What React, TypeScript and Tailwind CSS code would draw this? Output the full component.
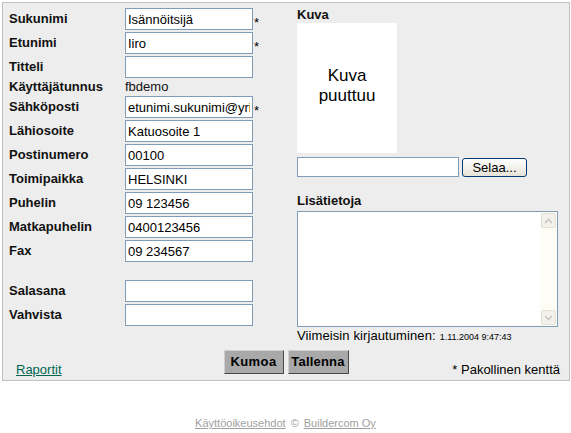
import React from "react";

const font = { fontFamily: '"Liberation Sans", Arial, sans-serif' };

type Row =
  | { kind: "input"; label: string; value: string; req?: boolean; pw?: boolean }
  | { kind: "text"; label: string; value: string }
  | { kind: "gap" };

const rows: Row[] = [
  { kind: "input", label: "Sukunimi", value: "Isännöitsijä", req: true },
  { kind: "input", label: "Etunimi", value: "Iiro", req: true },
  { kind: "input", label: "Titteli", value: "" },
  { kind: "text", label: "Käyttäjätunnus", value: "fbdemo" },
  { kind: "input", label: "Sähköposti", value: "etunimi.sukunimi@yritys.fi", req: true },
  { kind: "input", label: "Lähiosoite", value: "Katuosoite 1" },
  { kind: "input", label: "Postinumero", value: "00100" },
  { kind: "input", label: "Toimipaikka", value: "HELSINKI" },
  { kind: "input", label: "Puhelin", value: "09 123456" },
  { kind: "input", label: "Matkapuhelin", value: "0400123456" },
  { kind: "input", label: "Fax", value: "09 234567" },
  { kind: "gap" },
  { kind: "input", label: "Salasana", value: "", pw: true },
  { kind: "input", label: "Vahvista", value: "", pw: true },
];

function FormRow({ row }: { row: Row }) {
  if (row.kind === "gap") return <div className="h-[16px]" />;
  if (row.kind === "text")
    return (
      <div className="flex h-[16px] items-center">
        <span className="w-[116px] text-[13px] font-bold text-[#111]">{row.label}</span>
        <span className="text-[13px] text-[#111]">{row.value}</span>
      </div>
    );
  return (
    <div className="flex h-[24px] items-center">
      <span className="w-[116px] text-[13px] font-bold text-[#111]">{row.label}</span>
      <input
        type={row.pw ? "password" : "text"}
        defaultValue={row.value}
        className="h-[22px] w-[128px] border border-[#7f9db9] bg-white px-[2px] text-[13px] text-black outline-none"
        style={font}
      />
      {row.req && <span className="mt-[6px] self-center pl-[1px] text-[13px] leading-none text-black">*</span>}
    </div>
  );
}

function ScrollBtn({ up }: { up: boolean }) {
  return (
    <div className="flex h-[15px] w-[15px] items-center justify-center rounded-[2px] border border-[#e3e2d8] bg-[#f3f2ea]">
      <svg width="9" height="6" viewBox="0 0 9 6">
        <path
          d={up ? "M1 5 L4.5 1.5 L8 5" : "M1 1 L4.5 4.5 L8 1"}
          fill="none"
          stroke="#c8c8c0"
          strokeWidth="1.6"
        />
      </svg>
    </div>
  );
}

export default function App() {
  return (
    <div className="min-h-[433px] bg-white pt-[2px]" style={font}>
      <div className="ml-[2px] flex w-[568px] flex-col border border-[#c0c0c0] bg-[#ededed]">
        <div className="flex">
          <div className="w-[294px] pl-[6px] pt-[4px]">
            {rows.map((r, i) => (
              <FormRow key={i} row={r} />
            ))}
          </div>
          <div className="flex w-[261px] flex-col pt-[4px]">
            <div className="h-[16px] text-[13px] font-bold leading-[16px] text-[#111]">Kuva</div>
            <div className="flex h-[130px] w-[100px] flex-col items-center justify-center bg-white pb-[4px] text-[17px] leading-[20px] text-black">
              <span>Kuva</span>
              <span>puuttuu</span>
            </div>
            <div className="mt-[4px] flex h-[20px] items-center gap-[3px]">
              <input className="h-[20px] w-[162px] border border-[#7f9db9] bg-white outline-none" />
              <button
                className="h-[19px] w-[65px] rounded-[3px] border border-[#003c74] bg-gradient-to-b from-white to-[#e6e3d6] text-[13px] leading-[17px] text-black"
                style={font}
              >
                Selaa...
              </button>
            </div>
            <div className="mt-[16px] h-[16px] text-[13px] font-bold leading-[16px] text-[#111]">Lisätietoja</div>
            <div className="mt-[2px] flex h-[116px] w-[261px] border border-[#7f9db9] bg-white">
              <textarea className="flex-1 resize-none bg-white outline-none" />
              <div className="flex w-[17px] flex-col justify-between bg-[#fdfdf6] p-[1px] pr-[1px]">
                <ScrollBtn up />
                <ScrollBtn up={false} />
              </div>
            </div>
            <div className="mt-[1px] flex h-[16px] items-baseline leading-[16px] text-black">
              <span className="text-[13px] tracking-[0.1px]">Viimeisin kirjautuminen:</span>
              <span className="ml-[4px] text-[9px]">1.11.2004 9:47:43</span>
            </div>
          </div>
        </div>
        <div className="grid h-[36px] grid-cols-[1fr_auto_1fr]">
          <div className="flex items-end pb-[2px] pl-[13px]">
            <a href="#" className="text-[13px] leading-[16px] text-[#006652] underline">
              Raportit
            </a>
          </div>
          <div className="flex gap-[4px] pt-[6px]">
            <button
              className="h-[24px] w-[60px] border border-t-[#d0d0d0] border-l-[#d0d0d0] border-r-[#4a4a4a] border-b-[#4a4a4a] bg-[#a9a9a9] text-[13px] font-bold tracking-[0.4px] text-black"
              style={font}
            >
              Kumoa
            </button>
            <button
              className="h-[24px] w-[61px] border border-t-[#d0d0d0] border-l-[#d0d0d0] border-r-[#4a4a4a] border-b-[#4a4a4a] bg-[#a9a9a9] text-[13px] font-bold tracking-[0.2px] text-black"
              style={font}
            >
              Tallenna
            </button>
          </div>
          <div className="flex items-end justify-end pb-[2px] pr-[9px]">
            <span className="text-[13px] leading-[16px] text-black">* Pakollinen kenttä</span>
          </div>
        </div>
      </div>
      <div className="mt-[36px] flex justify-center gap-[5px] text-[11px] leading-[13px] text-[#a0a0a0]">
        <a href="#" className="underline">Käyttöoikeusehdot</a>
        <span>©</span>
        <a href="#" className="underline">Buildercom Oy</a>
      </div>
    </div>
  );
}
